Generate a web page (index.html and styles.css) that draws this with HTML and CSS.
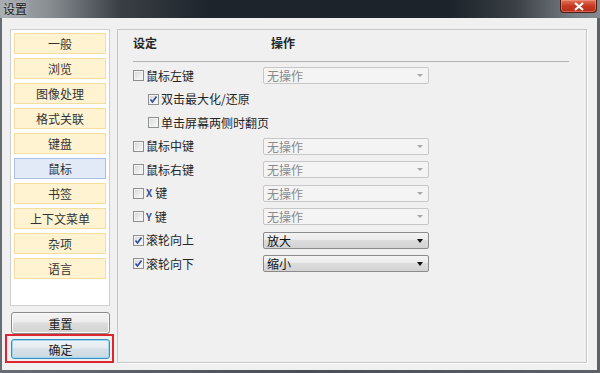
FILE: index.html
```html
<!DOCTYPE html>
<html lang="zh-CN">
<head>
    <meta charset="UTF-8">
    <title>设置</title>
    <link rel="stylesheet" href="styles.css">
</head>
<body>
<div class="window">
    <div class="titlebar">
        <span class="title">设置</span>
        <span class="close-btn">
            <svg width="12" height="9" viewBox="0 0 12 9"><path d="M2 1 L10 8 M10 1 L2 8" stroke="#fff" stroke-width="2.2" fill="none"/></svg>
        </span>
    </div>

    <div class="dialog">
        <!-- menu lateral -->
        <div class="side">
            <ul class="nav">
                <li>一般</li>
                <li>浏览</li>
                <li>图像处理</li>
                <li>格式关联</li>
                <li>键盘</li>
                <li class="active">鼠标</li>
                <li>书签</li>
                <li>上下文菜单</li>
                <li>杂项</li>
                <li>语言</li>
            </ul>
            <button class="btn">重置</button>
            <div class="focus-ring">
                <button class="btn btn-ok">确定</button>
            </div>
        </div>

        <!-- painel do mouse -->
        <div class="panel">
            <div class="head">
                <span class="col-set">设定</span>
                <span>操作</span>
            </div>
            <div class="rows">
                <div class="row">
                    <label class="opt"><span class="box"></span>鼠标左键</label>
                    <div class="select disabled">无操作<i class="arrow"></i></div>
                </div>
                <div class="row sub">
                    <label class="opt"><span class="box checked"><svg width="9" height="9" viewBox="0 0 9 9"><polyline points="1.5,4.5 3.5,7 7.5,1.5" fill="none" stroke="#2a49a8" stroke-width="1.6"/></svg></span>双击最大化/还原</label>
                </div>
                <div class="row sub">
                    <label class="opt"><span class="box"></span>单击屏幕两侧时翻页</label>
                </div>
                <div class="row">
                    <label class="opt"><span class="box"></span>鼠标中键</label>
                    <div class="select disabled">无操作<i class="arrow"></i></div>
                </div>
                <div class="row">
                    <label class="opt"><span class="box"></span>鼠标右键</label>
                    <div class="select disabled">无操作<i class="arrow"></i></div>
                </div>
                <div class="row">
                    <label class="opt"><span class="box"></span><span class="key">X</span>键</label>
                    <div class="select disabled">无操作<i class="arrow"></i></div>
                </div>
                <div class="row">
                    <label class="opt"><span class="box"></span><span class="key">Y</span>键</label>
                    <div class="select disabled">无操作<i class="arrow"></i></div>
                </div>
                <div class="row">
                    <label class="opt"><span class="box checked"><svg width="9" height="9" viewBox="0 0 9 9"><polyline points="1.5,4.5 3.5,7 7.5,1.5" fill="none" stroke="#2a49a8" stroke-width="1.6"/></svg></span>滚轮向上</label>
                    <div class="select">放大<i class="arrow"></i></div>
                </div>
                <div class="row">
                    <label class="opt"><span class="box checked"><svg width="9" height="9" viewBox="0 0 9 9"><polyline points="1.5,4.5 3.5,7 7.5,1.5" fill="none" stroke="#2a49a8" stroke-width="1.6"/></svg></span>滚轮向下</label>
                    <div class="select">缩小<i class="arrow"></i></div>
                </div>
            </div>
        </div>
    </div>
</div>
</body>
</html>
```

FILE: styles.css
```css
body {
    margin: 0;
    padding: 0;
    font-family: "Noto Sans CJK SC", "Noto Sans", sans-serif;
    font-size: 12px;
    color: #262626;
    background-color: #50555b;
}

.window {
    width: 600px;
    height: 373px;
    background: linear-gradient(to right, #686d73, #4a4f55 50%, #5d6268);
    overflow: hidden;
}

.titlebar {
    height: 18px;
    display: flex;
    align-items: flex-start;
    background: linear-gradient(to right, #a9adb1 0, #8a8f94 8%, #3a3f46 20%, #1e242b 35%, #1d232a 75%, #3b4047 86%, #7a7f85 96%, #868a8e 100%);
}

.title {
    padding: 1px 0 0 3px;
    line-height: 16px;
    color: #1c1c1c;
    text-shadow: 0 0 4px #d8dadc;
}

.close-btn {
    margin-left: auto;
    margin-right: 3px;
    width: 35px;
    height: 12px;
    display: flex;
    align-items: center;
    justify-content: center;
    background: linear-gradient(#e0745a, #c63a22 50%, #b52c16);
    border: 1px solid #4a1c14;
    border-top: none;
    border-radius: 0 0 4px 4px;
    box-shadow: inset 0 0 0 1px rgba(255, 170, 150, 0.45);
}

.dialog {
    display: flex;
    height: 352px;
    margin: 0 3px 0 2px;
    padding: 11px 10px 7px 8px;
    box-sizing: border-box;
    background-color: #f0f0f0;
}

.side {
    width: 100px;
    display: flex;
    flex-direction: column;
}

.nav {
    list-style: none;
    margin: 0;
    height: 280px;
    box-sizing: border-box;
    padding: 3px 3px 0 3px;
    background-color: #fff;
    border: 1px solid #cfcfcf;
}

.nav li {
    height: 21px;
    box-sizing: border-box;
    margin-bottom: 4px;
    line-height: 19px;
    text-align: center;
    color: #333;
    background-color: #fff3d1;
    border: 1px solid #f5dc9f;
}

.nav li.active {
    background-color: #e2eaf7;
    border-color: #aac1e3;
}

.btn {
    margin: 6px 0 0 1px;
    width: 99px;
    height: 22px;
    padding: 0;
    font-family: inherit;
    font-size: 12px;
    color: #1e1e1e;
    background: linear-gradient(#f4f4f4, #ececec 45%, #dddddd 50%, #d2d2d2);
    border: 1px solid #8a8a8a;
    border-radius: 3px;
    box-shadow: inset 0 0 0 1px #fbfbfb;
}

.focus-ring {
    margin-left: -5px;
    width: 109px;
    box-sizing: border-box;
    padding: 3px 0 2px 4px;
    border: 2px solid #de2430;
}

.btn-ok {
    display: block;
    margin: 0;
    height: 20px;
    border-color: #3a8ec2;
    background: linear-gradient(#eef3f6, #e3eaef 45%, #d6e0e7 50%, #ccd8e1);
    box-shadow: inset 0 0 0 1px #9ad7f3;
}

.panel {
    flex: 1;
    margin-left: 7px;
    border: 1px solid #c6c6c6;
    box-shadow: 1px 1px 0 #fff;
    padding: 0 17px 0 15px;
}

.head {
    display: flex;
    padding: 5px 0 10px 0;
    line-height: 16px;
    font-weight: bold;
    border-bottom: 1px solid #b4b4b4;
}

.col-set {
    width: 138px;
}

.rows {
    padding-top: 2px;
}

.row {
    height: 23.5px;
    display: flex;
    align-items: center;
}

.opt {
    width: 130px;
    display: flex;
    align-items: center;
    line-height: 16px;
}

.sub .opt {
    padding-left: 15px;
}

.box {
    width: 11px;
    height: 11px;
    box-sizing: border-box;
    margin-right: 2px;
    display: flex;
    align-items: center;
    justify-content: center;
    border: 1px solid #8e8f8f;
    background: linear-gradient(135deg, #d4d4d4, #f2f2f2 70%, #fafafa);
    box-shadow: inset 0 0 0 1px #f3f3f3;
}

.key {
    color: #3b4c8a;
    font-size: 10px;
    font-weight: bold;
    margin-right: 3px;
}

.select {
    position: relative;
    width: 166px;
    height: 17px;
    box-sizing: border-box;
    padding-left: 3px;
    line-height: 15px;
    color: #111;
    border: 1px solid #8b8b8b;
    border-radius: 2px;
    background: linear-gradient(#f3f3f3, #ebebeb 45%, #dcdcdc 50%, #d3d3d3);
}

.select.disabled {
    color: #8a8a8a;
    border-color: #c7c7c7;
    background: #f4f4f4;
}

.arrow {
    position: absolute;
    right: 5px;
    top: 6px;
    width: 0;
    height: 0;
    border-left: 3.5px solid transparent;
    border-right: 3.5px solid transparent;
    border-top: 4px solid #111;
}

.disabled .arrow {
    border-top-color: #a8a8a8;
    border-left-width: 3px;
    border-right-width: 3px;
    border-top-width: 3px;
}
```
